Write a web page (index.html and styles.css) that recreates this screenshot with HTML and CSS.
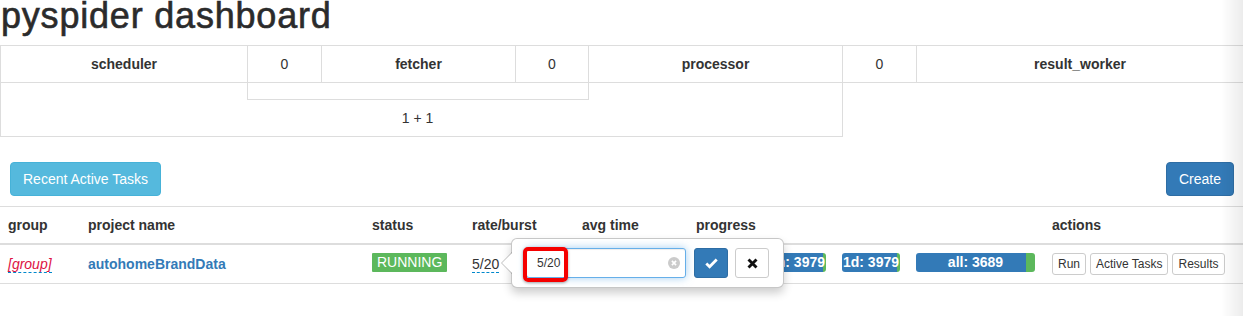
FILE: index.html
```html
<!DOCTYPE html>
<html lang="en">
<head>
    <meta charset="UTF-8">
    <title>pyspider dashboard</title>
    <link rel="stylesheet" href="styles.css">
</head>
<body>
    <h1 class="page-title">pyspider dashboard</h1>

    <div class="queue-status">
        <div class="queue-row">
            <div class="queue-cell name">scheduler</div>
            <div class="queue-cell">0</div>
            <div class="queue-cell name">fetcher</div>
            <div class="queue-cell">0</div>
            <div class="queue-cell name">processor</div>
            <div class="queue-cell">0</div>
            <div class="queue-cell name">result_worker</div>
        </div>
        <div class="queue-foot">
            <div class="queue-split"></div>
            <div class="queue-total">1 + 1</div>
        </div>
    </div>

    <div class="toolbar">
        <button class="btn btn-info">Recent Active Tasks</button>
        <button class="btn btn-primary">Create</button>
    </div>

    <table class="projects">
        <colgroup>
            <col style="width: 80px">
            <col style="width: 284px">
            <col style="width: 100px">
            <col style="width: 110px">
            <col style="width: 114px">
            <col style="width: 356px">
            <col>
        </colgroup>
        <thead>
            <tr>
                <th>group</th>
                <th>project name</th>
                <th>status</th>
                <th>rate/burst</th>
                <th>avg time</th>
                <th>progress</th>
                <th>actions</th>
            </tr>
        </thead>
        <tbody>
            <tr>
                <td><span class="editable editable-empty">[group]</span></td>
                <td><a class="project-name" href="#">autohomeBrandData</a></td>
                <td><span class="label label-success">RUNNING</span></td>
                <td class="rate-cell">
                    <span class="editable">5/20</span>
                    <div class="popover">
                        <div class="editable-input">
                            <input class="form-control" type="text" value="5/20">
                            <span class="clear-x">
                                <svg width="12" height="12" viewBox="0 0 12 12"><circle cx="6" cy="6" r="6" fill="#cbcbcb"/><path d="M3.9 3.9 L8.1 8.1 M8.1 3.9 L3.9 8.1" stroke="#fff" stroke-width="1.6"/></svg>
                            </span>
                            <span class="highlight"></span>
                        </div>
                        <button class="btn btn-primary btn-sm editable-submit">
                            <svg width="13" height="11" viewBox="0 0 13 11"><path d="M1.3 5.6 L4.6 8.8 L11.7 1.6" fill="none" stroke="#fff" stroke-width="2.8"/></svg>
                        </button>
                        <button class="btn btn-default btn-sm editable-cancel">
                            <svg width="11" height="11" viewBox="0 0 11 11"><path d="M1.5 1.5 L9.5 9.5 M9.5 1.5 L1.5 9.5" stroke="#111" stroke-width="2.9"/></svg>
                        </button>
                    </div>
                </td>
                <td></td>
                <td>
                    <div class="progress-list">
                        <div class="progress" style="width: 56px; --done: 3px">5m: 3979</div>
                        <div class="progress" style="width: 58px; --done: 3px">1h: 3979</div>
                        <div class="progress" style="width: 58px; --done: 3px">1d: 3979</div>
                        <div class="progress" style="width: 119px; --done: 9px">all: 3689</div>
                    </div>
                </td>
                <td>
                    <div class="actions">
                        <button class="btn btn-default btn-xs">Run</button>
                        <button class="btn btn-default btn-xs">Active Tasks</button>
                        <button class="btn btn-default btn-xs">Results</button>
                    </div>
                </td>
            </tr>
        </tbody>
    </table>
</body>
</html>
```

FILE: styles.css
```css
html {
    overflow: hidden;
}
body {
    margin: 0;
    min-height: 316px;
    font-family: 'Liberation Sans', Arial, sans-serif;
    font-size: 14px;
    line-height: 20px;
    color: #333;
    background-color: #fff;
}
/* faint shade along the right edge of the window */
body::after {
    content: "";
    position: fixed;
    top: 0;
    right: 0;
    width: 22px;
    height: 100%;
    background: linear-gradient(to right, rgba(0, 0, 0, 0), rgba(0, 0, 0, 0.075));
    pointer-events: none;
}
.page-title {
    margin: -4px 0 9px 1px;
    font-size: 36px;
    font-weight: normal;
    line-height: 40px;
    letter-spacing: 0.8px;
    color: #2b2b2b;
    -webkit-text-stroke: 0.6px #2b2b2b;
}

/* queue status table */
.queue-row {
    display: grid;
    grid-template-columns: 247px 74px 194px 73px 254px 74px 1fr;
    border-top: 1px solid #ddd;
    border-left: 1px solid #ddd;
}
.queue-cell {
    padding: 8px;
    text-align: center;
    border-right: 1px solid #ddd;
    border-bottom: 1px solid #ddd;
}
.queue-cell:last-child {
    border-right: none;
}
.queue-cell.name {
    font-weight: bold;
}
.queue-foot {
    width: 843px;
    box-sizing: border-box;
    border: 1px solid #ddd;
    border-top: none;
}
.queue-split {
    width: 342px;
    height: 17px;
    margin-left: 246px;
    box-sizing: border-box;
    border: 1px solid #ddd;
    border-top: none;
}
.queue-total {
    padding: 8px 8px 8px 0;
    text-align: center;
}

/* buttons */
.toolbar {
    display: flex;
    justify-content: space-between;
    margin-top: 25px;
    padding: 0 9px 0 10px;
}
.btn {
    display: inline-block;
    padding: 6px 12px;
    font-family: inherit;
    font-size: 14px;
    line-height: 20px;
    border: 1px solid transparent;
    border-radius: 4px;
    color: #fff;
    cursor: pointer;
}
.btn-info {
    background-color: #55b9dd;
    border-color: #46b2d8;
}
.btn-primary {
    background-color: #337ab7;
    border-color: #2e6da4;
}
.btn-default {
    background-color: #fff;
    border-color: #ccc;
    color: #333;
}
.btn-xs {
    padding: 1px 5px;
    font-size: 12px;
    line-height: 18px;
    border-radius: 3px;
}

/* projects table */
.projects {
    width: 100%;
    margin-top: 10px;
    border-collapse: collapse;
    table-layout: fixed;
}
.projects th {
    padding: 8px;
    text-align: left;
    border-top: 1px solid #ddd;
    border-bottom: 2px solid #ddd;
}
.projects td {
    padding: 8px;
    line-height: 22px;
    border-bottom: 1px solid #ddd;
    vertical-align: top;
    white-space: nowrap;
}
.editable {
    border-bottom: 1px dashed #08c;
}
.editable-empty {
    color: #d14;
    font-style: italic;
}
.project-name {
    color: #337ab7;
    font-weight: bold;
    text-decoration: none;
}
.label {
    display: inline-block;
    vertical-align: top;
    padding: 0 5px;
    line-height: 19px;
    border-radius: 1px;
    color: #fff;
}
.label-success {
    background-color: #5cb85c;
}
.progress-list {
    display: flex;
    gap: 16px;
}
.progress {
    height: 19px;
    line-height: 19px;
    border-radius: 3px;
    text-align: center;
    font-weight: bold;
    color: #fff;
    overflow: hidden;
    background: linear-gradient(to left, #5cb85c var(--done), #337ab7 var(--done));
}
.actions {
    display: flex;
    gap: 4px;
}

/* rate/burst edit popover */
.rate-cell {
    position: relative;
}
.popover {
    position: absolute;
    left: 47px;
    top: -7px;
    z-index: 10;
    display: flex;
    align-items: flex-start;
    padding: 9px 14px;
    background-color: #fff;
    border: 1px solid rgba(0, 0, 0, 0.22);
    border-radius: 6px;
    box-shadow: 0 5px 10px rgba(0, 0, 0, 0.2);
}
.popover::before,
.popover::after {
    content: "";
    position: absolute;
    top: 50%;
    border-style: solid;
    border-color: transparent;
}
.popover::before {
    left: -11px;
    margin-top: -11px;
    border-width: 11px 11px 11px 0;
    border-right-color: rgba(0, 0, 0, 0.25);
}
.popover::after {
    left: -10px;
    margin-top: -10px;
    border-width: 10px 10px 10px 0;
    border-right-color: #fff;
}
.editable-input {
    position: relative;
}
.form-control {
    display: block;
    width: 160px;
    height: 30px;
    box-sizing: border-box;
    padding: 5px 10px;
    font-family: inherit;
    font-size: 12px;
    color: #333;
    border: 1px solid #66afe9;
    border-radius: 3px;
    outline: none;
    box-shadow: inset 0 1px 1px rgba(0, 0, 0, 0.075), 0 0 8px rgba(102, 175, 233, 0.6);
}
.clear-x {
    position: absolute;
    right: 6px;
    top: 9px;
    width: 12px;
    height: 12px;
    line-height: 0;
}
.highlight {
    position: absolute;
    left: -3px;
    top: -1px;
    width: 45px;
    height: 35px;
    box-sizing: border-box;
    border: 4px solid #f50000;
    border-radius: 5px;
    box-shadow: 0 1px 3px rgba(0, 0, 0, 0.35);
}
.btn-sm {
    width: 34px;
    height: 30px;
    padding: 0;
    border-radius: 3px;
    display: flex;
    align-items: center;
    justify-content: center;
}
.editable-submit {
    margin-left: 8px;
}
.editable-cancel {
    margin-left: 7px;
}
```
